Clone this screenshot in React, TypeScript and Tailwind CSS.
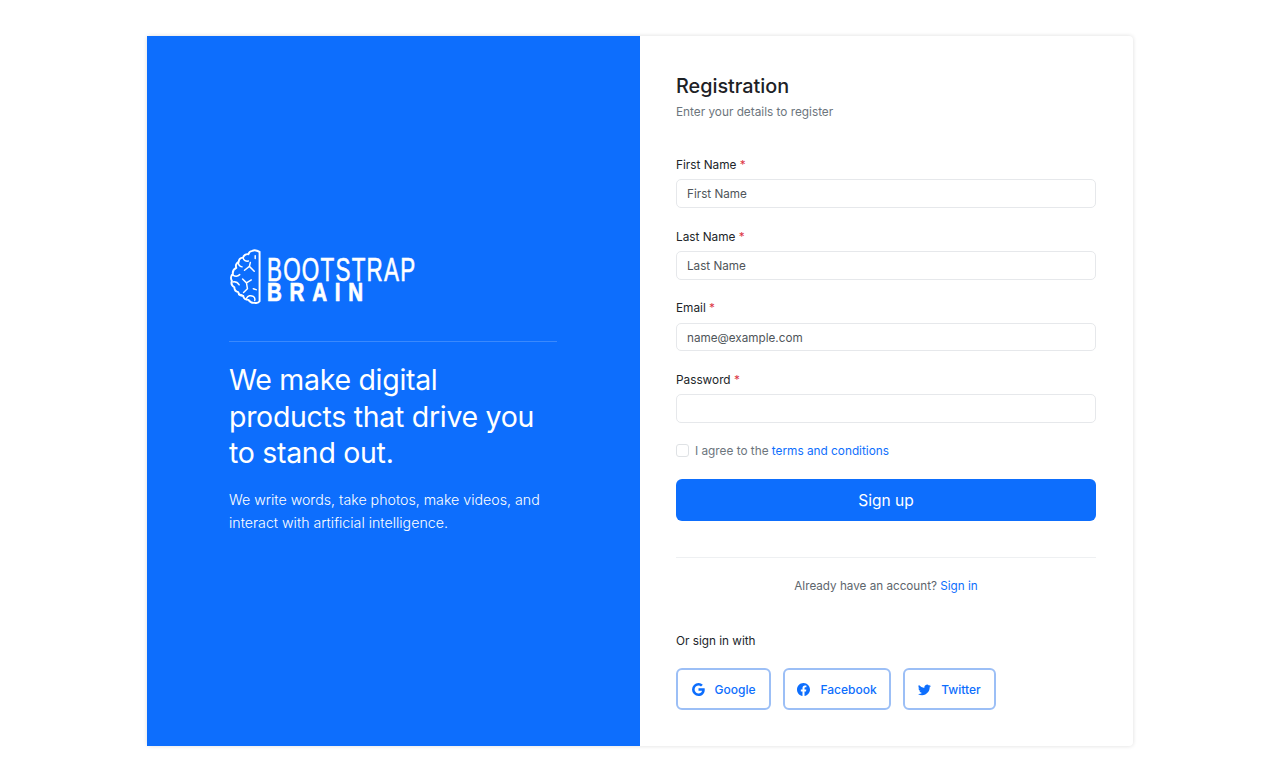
import React from "react";

function Brain() {
  return (
    <svg width="33" height="62" viewBox="0 0 34 62" fill="none" stroke="white" strokeWidth="2" strokeLinecap="round" strokeLinejoin="round">
      <path d="M31 3c-1.500-1.500-5-2-7-1-2 .2-3.500 1.500-4 3.500-2.500-.5-5 1-5.500 3.500-2.500.2-4.500 2-4.500 4.500-2.500 1-3.500 3.500-2.500 6-2.500 1.200-4 3.500-3.500 6.500-2 1.500-2.500 4.500-1 7-1 2.500 0 5 2.500 6.500 0 2.500 1.500 4.500 4 5 .5 2.500 2.500 4 5 4 .8 2.500 3 4 5.500 4 1.500 2 4 3.500 6.500 3 2 .5 4 0 5-1.500V3z" />
      <path d="M14.500 9c.5 3 3 4 5.500 3.500M9.500 13.500c0 3 1.500 4.500 4 5M16 22l5-4 5 5M21 18l1-4M4 27c2.500 1.500 5 1.500 7-.5M4 34c3-.5 5 .5 6.500 3M14 31l4 4 1 6M18 35l5-3M19 41l-4 4M10 47c2-.5 3.500 0 5 1.500M18 51c1.500-3 4.500-3.500 7-2 1.500 1 2 2.500 1.500 4M25 41l3 1M27 7v3" strokeWidth="1.500" />
    </svg>
  );
}

function Field({ label, placeholder }: { label: string; placeholder: string }) {
  return (
    <div className="h-[71.700px]">
      <label className="block h-[24.400px] pt-[1px] text-[11.800px] font-normal leading-[18px] text-[#212529]">
        {label} <span className="text-[#dc3545]">*</span>
      </label>
      <input
        placeholder={placeholder}
        className="block h-[28.600px] w-full rounded-[5px] border border-[#e6e8eb] bg-white px-[10px] pt-[1px] text-[11.700px] text-[#3f4549] placeholder:text-[#4f555a] outline-none"
      />
    </div>
  );
}

function SocialButton({ children, label, width }: { children: React.ReactNode; label: string; width: string }) {
  return (
    <button className={`flex h-[42px] items-center justify-center gap-[10px] rounded-[6px] border-2 border-[#9cbff6] bg-white pt-[2px] text-[12px] font-medium text-[#0d6efd] ${width}`}>
      {children}
      {label}
    </button>
  );
}

export default function App() {
  return (
    <div className="min-h-[768px] bg-white pt-[36px] font-['Inter','Liberation_Sans',sans-serif]">
      <div className="mx-auto flex h-[710px] w-[986px] rounded-[4px] bg-white shadow-[0_0_4px_rgba(0,0,0,0.14)]">
        <section className="flex w-[493px] flex-col bg-[#0d6efd] pl-[82px] pr-[76px] pt-[212px] text-white">
          <div className="flex h-[62px] items-center gap-[5px]">
            <Brain />
            <div className="flex flex-col">
              <span className="h-[25px] origin-left scale-x-[0.68] whitespace-nowrap font-['Liberation_Sans',sans-serif] text-[33px] leading-[25px] tracking-[1.800px] [-webkit-text-stroke:0.6px_white]">BOOTSTRAP</span>
              <span className="h-[20px] origin-left scale-x-[0.82] whitespace-nowrap font-['Liberation_Sans',sans-serif] text-[25px] font-bold leading-[20px] tracking-[9.500px] [-webkit-text-stroke:0.7px_white]">BRAIN</span>
            </div>
          </div>
          <div className="mt-[31px] h-px w-[328px] bg-[#3a89fd]" />
          <h1 className="mt-[20px] w-[320px] text-[28.500px] font-normal leading-[36.500px] tracking-[-0.300px]">
            We make digital products that drive you to stand out.
          </h1>
          <p className="mt-[16px] text-[14.200px] font-light leading-[23px]">
            We write words, take photos, make videos, and interact with artificial intelligence.
          </p>
        </section>
        <section className="flex-1 pl-[36px] pr-[37px] pt-[36px]">
          <h2 className="text-[19.800px] font-medium leading-[28px] text-[#1d2125]">Registration</h2>
          <p className="mt-[3px] text-[11.800px] leading-[18px] text-[#6c757d]">Enter your details to register</p>
          <div className="mt-[34px]">
            <Field label="First Name" placeholder="First Name" />
            <Field label="Last Name" placeholder="Last Name" />
            <Field label="Email" placeholder="name@example.com" />
            <Field label="Password" placeholder="" />
          </div>
          <div className="flex items-center gap-[6px] text-[11.800px] leading-[18px] text-[#6c757d]">
            <span className="h-[13px] w-[13px] rounded-[3px] border border-[#dfe2e5] bg-white" />
            <span>I agree to the <a className="text-[#0d6efd]">terms and conditions</a></span>
          </div>
          <button className="mt-[19px] flex h-[42px] w-full items-center justify-center rounded-[6px] bg-[#0d6efd] pt-[2px] text-[15.500px] text-white">Sign up</button>
          <div className="mt-[36px] h-px bg-[#eef0f2]" />
          <p className="mt-[19px] text-center text-[11.700px] leading-[18px] text-[#5e666d]">
            Already have an account? <a className="text-[#0d6efd]">Sign in</a>
          </p>
          <p className="mt-[37px] text-[11.750px] font-normal leading-[18px] text-[#212529]">Or sign in with</p>
          <div className="mt-[18px] flex gap-[12px]">
            <SocialButton label="Google" width="w-[95px]">
              <svg width="13" height="13" viewBox="0 0 16 16" fill="currentColor"><path d="M15.545 6.558a9.42 9.42 0 0 1 .139 1.626c0 2.434-.87 4.492-2.384 5.885h.002C11.978 15.292 10.158 16 8 16A8 8 0 1 1 8 0a7.689 7.689 0 0 1 5.352 2.082l-2.284 2.284A4.347 4.347 0 0 0 8 3.166c-2.087 0-3.860 1.408-4.492 3.304a4.792 4.792 0 0 0 0 3.063h.003c.635 1.893 2.405 3.301 4.492 3.301 1.078 0 2.004-.276 2.722-.764h-.003a3.702 3.702 0 0 0 1.599-2.431H8v-3.080h7.545z" /></svg>
            </SocialButton>
            <SocialButton label="Facebook" width="w-[108px]">
              <svg width="13" height="13" viewBox="0 0 16 16" fill="currentColor"><path d="M16 8.049c0-4.446-3.582-8.050-8-8.050C3.580 0-.002 3.603-.002 8.050c0 4.017 2.926 7.347 6.750 7.951v-5.625h-2.030V8.050H6.750V6.275c0-2.017 1.195-3.131 3.022-3.131.876 0 1.791.157 1.791.157v1.980h-1.009c-.993 0-1.303.621-1.303 1.258v1.510h2.218l-.354 2.326H9.250V16c3.824-.604 6.750-3.934 6.750-7.951z" /></svg>
            </SocialButton>
            <SocialButton label="Twitter" width="w-[93px]">
              <svg width="13" height="13" viewBox="0 0 16 16" fill="currentColor"><path d="M5.026 15c6.038 0 9.341-5.003 9.341-9.334 0-.140 0-.282-.006-.422A6.685 6.685 0 0 0 16 3.542a6.658 6.658 0 0 1-1.889.518 3.301 3.301 0 0 0 1.447-1.817 6.533 6.533 0 0 1-2.087.793A3.286 3.286 0 0 0 7.875 6.030a9.325 9.325 0 0 1-6.767-3.429 3.289 3.289 0 0 0 1.018 4.382A3.323 3.323 0 0 1 .640 6.575v.045a3.288 3.288 0 0 0 2.632 3.218 3.203 3.203 0 0 1-.865.115 3.230 3.230 0 0 1-.614-.057 3.283 3.283 0 0 0 3.067 2.277A6.588 6.588 0 0 1 .780 13.580a6.320 6.320 0 0 1-.780-.045A9.344 9.344 0 0 0 5.026 15z" /></svg>
            </SocialButton>
          </div>
        </section>
      </div>
    </div>
  );
}
